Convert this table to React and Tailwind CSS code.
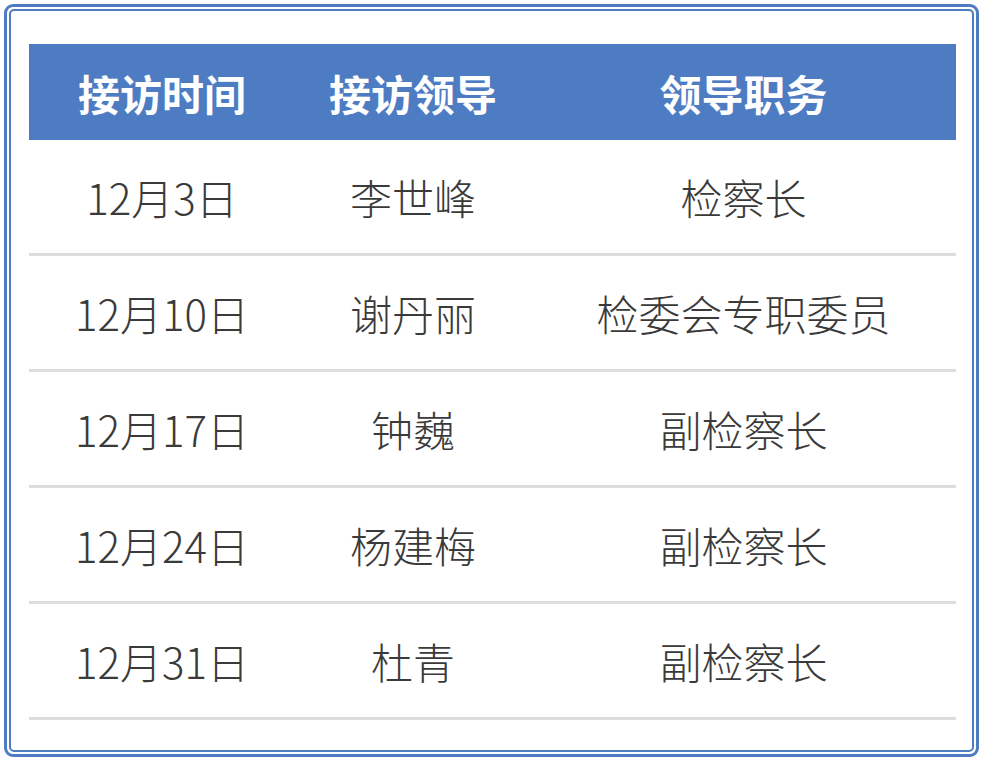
const rows = [
  ['12月3日', '李世峰', '检察长'],
  ['12月10日', '谢丹丽', '检委会专职委员'],
  ['12月17日', '钟巍', '副检察长'],
  ['12月24日', '杨建梅', '副检察长'],
  ['12月31日', '杜青', '副检察长'],
]

const cols = 'grid grid-cols-[266px_236px_425px]'

export default function App() {
  return (
    <div className="w-[991px] h-[764px] bg-white pt-[4px] pl-[4px] font-['Noto_Sans_CJK_SC','Noto_Sans',sans-serif]">
      <div className="w-[975px] h-[753px] border-[3px] border-[#4e7cc3] rounded-[9px] p-[2px]">
        <div className="h-full border-2 border-[#4e7cc3] rounded-[5px] pl-[18px] pr-[16px] pt-[33px]">
          {/* header */}
          <div className={`${cols} h-[96px] bg-[#4e7cc3] text-white font-bold text-[42px]`}>
            <div className="flex items-center justify-center">接访时间</div>
            <div className="flex items-center justify-center">接访领导</div>
            <div className="flex items-center justify-center">领导职务</div>
          </div>

          {rows.map((r, i) => (
            <div key={i} className={`${cols} h-[116px] border-b-[3px] border-[#dddddd] text-[#3a3a3a] text-[42px] font-light`}>
              {r.map((c, j) => (
                <div key={j} className="flex items-center justify-center">{c}</div>
              ))}
            </div>
          ))}
        </div>
      </div>
    </div>
  )
}
